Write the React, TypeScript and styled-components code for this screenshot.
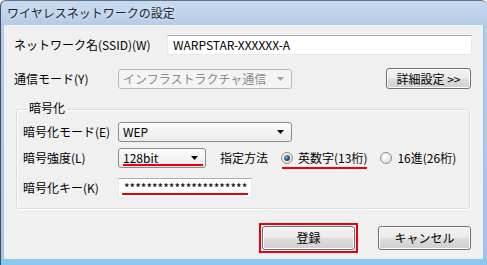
import React from "react";
import styled, { createGlobalStyle } from "styled-components";

const Global = createGlobalStyle`
  html, body { margin: 0; padding: 0; background: #f0f0f0; }
  body {
    font-family: "Noto Sans CJK JP", "Noto Sans", sans-serif;
    font-size: 12px;
    color: #000;
  }
  * { box-sizing: border-box; }
`;

const Window = styled.div`
  width: 487px;
  height: 265px;
  display: flex;
  flex-direction: column;
  background: linear-gradient(180deg, #c8daef 0px, #b4cbe6 24px, #a9c4e2 100%);
  border-left: 1px solid #3f4d5e;
  border-top: 1px solid #60728a;
  border-radius: 6px 6px 0 0;
  overflow: hidden;
`;

const TitleBar = styled.div`
  height: 24px;
  flex: none;
  display: flex;
  align-items: center;
  padding-left: 6px;
  font-size: 12px;
  line-height: 14px;
  color: #1d2633;
  text-shadow: 0 0 6px rgba(255, 255, 255, 0.9);
`;

const Frame = styled.div`
  flex: 1;
  display: flex;
  padding: 0 0 0 3px;
  border-bottom: 6px solid #8cc8ec;
`;

const Client = styled.div`
  flex: 1;
  display: flex;
  flex-direction: column;
  background: #f0f0f0;
  border-right: 1px solid #f8f8f8;
  margin-right: 4px;
  box-shadow: 1px 0 0 #7fc3ea;
  padding-top: 10px;
`;

const Row = styled.div<{ $top?: number; $left?: number; $right?: number }>`
  display: flex;
  align-items: center;
  margin-top: ${(p) => p.$top ?? 0}px;
  padding-left: ${(p) => p.$left ?? 0}px;
  padding-right: ${(p) => p.$right ?? 0}px;
`;

const Label = styled.div<{ $w: number }>`
  width: ${(p) => p.$w}px;
  flex: none;
  line-height: 14px;
  white-space: nowrap;
`;

const TextBox = styled.div<{ $w: number; $h?: number }>`
  position: relative;
  width: ${(p) => p.$w}px;
  height: ${(p) => p.$h ?? 20}px;
  background: #fff;
  border: 1px solid #e3e9ef;
  border-top-color: #abadb3;
  display: flex;
  align-items: center;
  padding-left: 5px;
  font-family: "Noto Sans CJK JP", sans-serif;
  font-size: 12px;
  line-height: 14px;
  white-space: nowrap;
  overflow: hidden;
`;

const Masked = styled.span`
  letter-spacing: 0;
`;

const Combo = styled.div<{ $w: number; $disabled?: boolean }>`
  position: relative;
  width: ${(p) => p.$w}px;
  height: 20px;
  flex: none;
  display: flex;
  align-items: center;
  justify-content: space-between;
  padding: 0 7px 0 4px;
  border: 1px solid ${(p) => (p.$disabled ? "#b5b9bd" : "#8b8b8b")};
  border-radius: 3px;
  background: ${(p) =>
    p.$disabled
      ? "#f4f4f4"
      : "linear-gradient(180deg, #fbfbfb 0%, #f3f3f3 50%, #ececec 100%)"};
  color: ${(p) => (p.$disabled ? "#8a8a8a" : "#000")};
  line-height: 14px;
  white-space: nowrap;
`;

const Arrow = ({ color }: { color: string }) => (
  <svg width="7" height="4" viewBox="0 0 7 4">
    <path d="M0 0H7L3.5 4Z" fill={color} />
  </svg>
);

const Button = styled.button<{ $w: number; $h?: number; $ml?: number }>`
  width: ${(p) => p.$w}px;
  height: ${(p) => p.$h ?? 24}px;
  margin-left: ${(p) => p.$ml ?? 0}px;
  flex: none;
  border: 1px solid #707070;
  border-radius: 3px;
  background: linear-gradient(180deg, #f2f2f2 0%, #ebebeb 48%, #dddddd 52%, #cfcfcf 100%);
  box-shadow: inset 0 0 0 1px #fcfcfc;
  font-family: "Noto Sans CJK JP", sans-serif;
  font-size: 12px;
  line-height: 14px;
  color: #000;
  padding: 0;
  display: flex;
  align-items: center;
  justify-content: center;
`;

const Group = styled.div`
  margin: 20px 12px 0 12px;
  border: 1px solid #d5dfe5;
  box-shadow: inset 1px 1px 0 #fff, 1px 1px 0 #fff;
  border-radius: 3px;
  padding: 0 0 10px 6px;
`;

const GroupTitle = styled.div`
  width: fit-content;
  margin: -9px 0 0 4px;
  padding: 0 2px;
  background: #f0f0f0;
  line-height: 14px;
`;

const Spacer = styled.div`
  flex: 1;
`;

const InlineText = styled.span<{ $ml?: number }>`
  margin-left: ${(p) => p.$ml ?? 0}px;
  line-height: 14px;
  white-space: nowrap;
`;

const RadioWrap = styled.label<{ $ml?: number }>`
  position: relative;
  display: flex;
  align-items: center;
  gap: 5px;
  margin-left: ${(p) => p.$ml ?? 0}px;
  line-height: 14px;
  white-space: nowrap;
`;

const RadioCircle = styled.span<{ $checked?: boolean }>`
  width: 12px;
  height: 12px;
  flex: none;
  border-radius: 50%;
  border: 1px solid #8e8f8f;
  background: radial-gradient(circle at 40% 40%, #ffffff 0%, #e6e6e6 60%, #cfcfcf 100%);
  display: flex;
  align-items: center;
  justify-content: center;
  &::after {
    content: "";
    width: 6px;
    height: 6px;
    border-radius: 50%;
    display: ${(p) => (p.$checked ? "block" : "none")};
    background: radial-gradient(circle at 35% 35%, #8fb7e0 0%, #2a5d94 45%, #0f2f55 100%);
  }
`;

const RedLine = styled.span<{ $left: number; $right: number; $bottom: number }>`
  position: absolute;
  left: ${(p) => p.$left}px;
  right: ${(p) => p.$right}px;
  bottom: ${(p) => p.$bottom}px;
  height: 2px;
  background: #e8000b;
`;

const RedFrame = styled.div`
  border: 2px solid #e8000b;
  padding: 1px;
  display: flex;
`;

export default function App() {
  return (
    <>
      <Global />
      <Window>
        <TitleBar>ワイヤレスネットワークの設定</TitleBar>
        <Frame>
          <Client>
            <Row $left={10} $right={10}>
              <Label $w={153}>ネットワーク名(SSID)(W)</Label>
              <TextBox $w={305}>WARPSTAR-XXXXXX-A</TextBox>
            </Row>
            <Row $top={13} $left={10} $right={11}>
              <Label $w={104}>通信モード(Y)</Label>
              <Combo $w={174} $disabled>
                <span>インフラストラクチャ通信</span>
                <Arrow color="#a0a0a0" />
              </Combo>
              <Spacer />
              <Button $w={85} $h={21}>詳細設定 &gt;&gt;</Button>
            </Row>
            <Group>
              <GroupTitle>暗号化</GroupTitle>
              <Row $top={7}>
                <Label $w={95}>暗号化モード(E)</Label>
                <Combo $w={174}>
                  <span>WEP</span>
                  <Arrow color="#000" />
                </Combo>
              </Row>
              <Row $top={6}>
                <Label $w={95}>暗号強度(L)</Label>
                <Combo $w={88}>
                  <span>128bit</span>
                  <Arrow color="#000" />
                  <RedLine $left={4} $right={2} $bottom={1} />
                </Combo>
                <InlineText $ml={14}>指定方法</InlineText>
                <RadioWrap $ml={13}>
                  <RadioCircle $checked />
                  <span>英数字(13桁)</span>
                  <RedLine $left={1} $right={0} $bottom={-4} />
                </RadioWrap>
                <RadioWrap $ml={13}>
                  <RadioCircle />
                  <span>16進(26桁)</span>
                </RadioWrap>
              </Row>
              <Row $top={10}>
                <Label $w={95}>暗号化キー(K)</Label>
                <TextBox $w={134}>
                  <Masked>**********************</Masked>
                  <RedLine $left={3} $right={3} $bottom={2} />
                </TextBox>
              </Row>
            </Group>
            <Row $top={14} $right={11}>
              <Spacer />
              <RedFrame>
                <Button $w={93}>登録</Button>
              </RedFrame>
              <Button $w={93} $ml={20}>キャンセル</Button>
            </Row>
          </Client>
        </Frame>
      </Window>
    </>
  );
}
